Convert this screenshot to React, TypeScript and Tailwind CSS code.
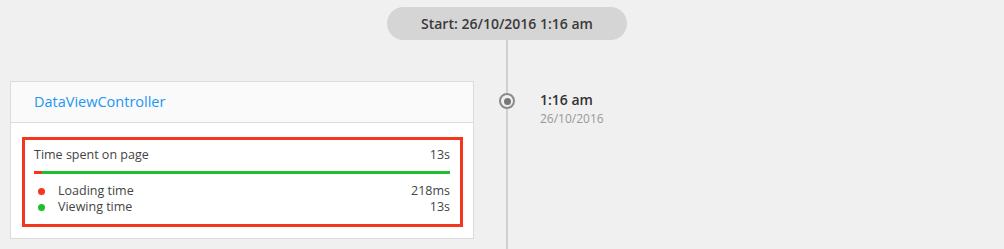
import React from "react";

export default function App() {
  return (
    <div
      className="w-[1004px] h-[249px] bg-[#f0f0f0] flex flex-col overflow-hidden text-[#444]"
      style={{ fontFamily: '"Open Sans", "Noto Sans", sans-serif' }}
    >
      <div className="pt-[7px] pl-[387px] flex">
        <div className="w-[240px] h-[33px] rounded-full bg-[#d5d5d5] flex items-center justify-center text-[14px] font-semibold text-[#3a3a3a]">
          Start: 26/10/2016 1:16 am
        </div>
      </div>
      <div className="flex flex-1">
        <div className="w-[474px] pl-[10px] pt-[41px] shrink-0">
          <div className="w-[464px] bg-white border border-[#dcdcdc]">
            <div className="h-[41px] bg-[#fafafa] border-b border-[#dcdcdc] flex items-center pl-[23px] text-[14.5px] text-[#2196f3]">
              DataViewController
            </div>
            <div className="pt-[14px] pl-[11px] pr-[10px] pb-[11px]">
              <div className="border-[3px] border-[#f3361d] pt-[6px] pr-[10px] pb-[8.5px] pl-[9px] text-[12.5px] text-[#444]">
                <div className="h-[18px] flex items-center justify-between">
                  <span>Time spent on page</span>
                  <span>13s</span>
                </div>
                <div className="mt-[7px] h-[3px] flex">
                  <div className="w-[8px] bg-[#f3361d]" />
                  <div className="flex-1 bg-[#1fbf2b]" />
                </div>
                <div className="mt-[9.5px]">
                  <div className="h-[16px] flex items-center justify-between">
                    <div className="flex items-center">
                      <span className="ml-[4px] w-[7px] h-[7px] rounded-full bg-[#f3361d]" />
                      <span className="ml-[13px]">Loading time</span>
                    </div>
                    <span>218ms</span>
                  </div>
                  <div className="h-[16px] flex items-center justify-between">
                    <div className="flex items-center">
                      <span className="ml-[4px] w-[7px] h-[7px] rounded-full bg-[#1fbf2b]" />
                      <span className="ml-[13px]">Viewing time</span>
                    </div>
                    <span>13s</span>
                  </div>
                </div>
              </div>
            </div>
          </div>
        </div>
        <div className="w-[66px] shrink-0 relative flex justify-center">
          <div className="w-[2px] h-full bg-[#d0d0d0]" />
          <div className="absolute top-[53px] left-[25px] w-[16px] h-[16px] rounded-full border-2 border-[#8a8a8a] bg-[#f0f0f0] flex items-center justify-center">
            <div className="w-[7px] h-[7px] rounded-full bg-[#777]" />
          </div>
        </div>
        <div className="pt-[50px]">
          <div className="text-[14px] font-semibold text-[#333] leading-[20px]">1:16 am</div>
          <div className="text-[12px] text-[#999] leading-[16px] mt-[1px]">26/10/2016</div>
        </div>
      </div>
    </div>
  );
}
